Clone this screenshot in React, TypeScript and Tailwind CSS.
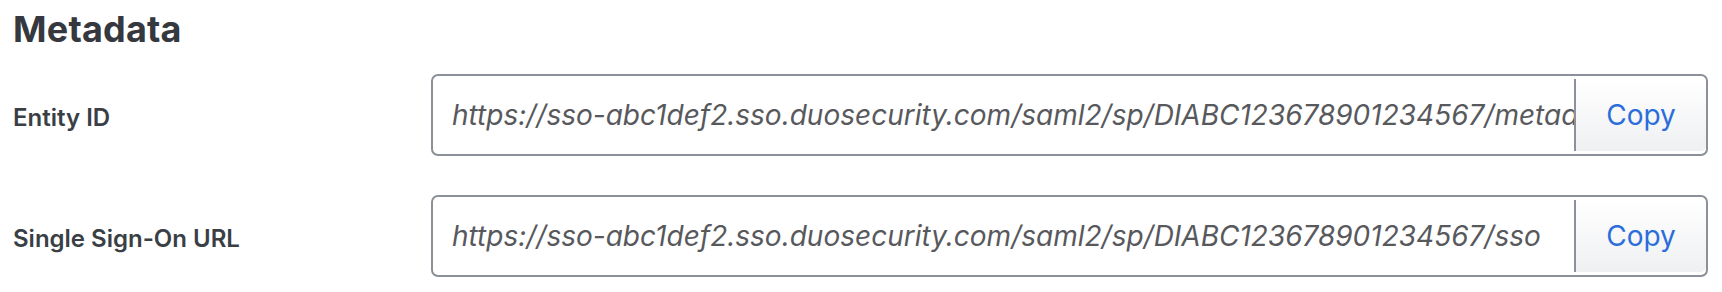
import React from 'react';

const rows = [
  { label: 'Entity ID', value: 'https://sso-abc1def2.sso.duosecurity.com/saml2/sp/DIABC123678901234567/metadata' },
  { label: 'Single Sign-On URL', value: 'https://sso-abc1def2.sso.duosecurity.com/saml2/sp/DIABC123678901234567/sso' },
];

export default function App() {
  return (
    <div className="bg-white w-[1722px] h-[292px] pl-[13px] pr-[14px] pt-[6px] font-['Inter','Liberation_Sans',sans-serif]">
      <h2 className="text-[36px] leading-[46px] font-bold text-[#35383e] tracking-[0.2px]">Metadata</h2>
      <div className="mt-[22px] flex flex-col gap-[39px]">
        {rows.map((row) => (
          <div key={row.label} className="flex items-center">
            <div className="w-[418px] pt-[5px] text-[24px] font-semibold text-[#3a3f46]">{row.label}</div>
            <div className="flex-1 h-[82px] flex items-stretch border-2 border-[#8b9099] rounded-[7px] p-[3px] pr-0 overflow-hidden">
              <div className="flex-1 overflow-hidden whitespace-nowrap flex items-center pl-[16px] text-[28px] italic text-[#58595d]">
                {row.value}
              </div>
              <button className="w-[132px] -my-[3px] py-[3px] flex">
                <span className="flex-1 flex items-center justify-center border-l-2 border-[#8b9099] bg-gradient-to-b from-white to-[#eff0f2] text-[28px] text-[#2b6ddb] rounded-r-[5px]">
                  Copy
                </span>
              </button>
            </div>
          </div>
        ))}
      </div>
    </div>
  );
}
